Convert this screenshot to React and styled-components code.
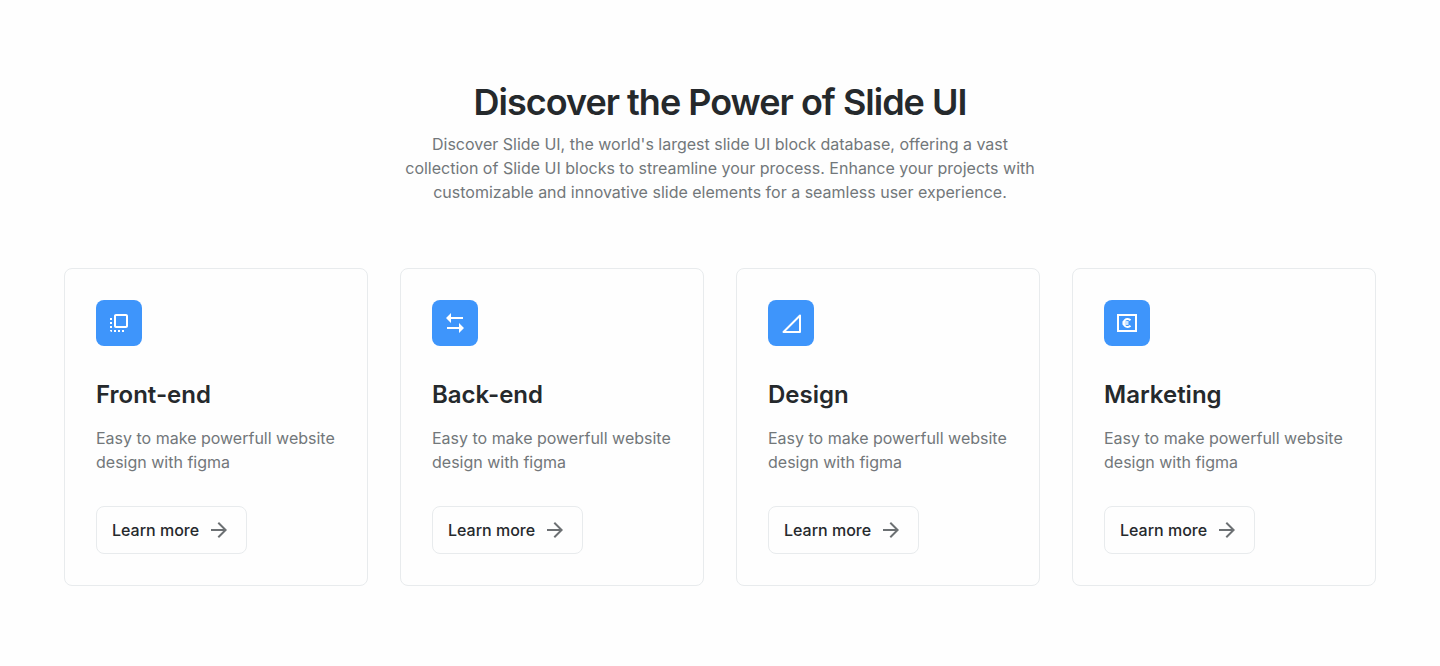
import React from "react";
import styled, { createGlobalStyle } from "styled-components";

const GlobalStyle = createGlobalStyle`
  *, *::before, *::after { box-sizing: border-box; }
  body {
    margin: 0;
    background: #fefefe;
    color: #25292c;
    font-family: Inter, "Liberation Sans", sans-serif;
    -webkit-font-smoothing: antialiased;
  }
`;

const Section = styled.main`
  display: flex;
  flex-direction: column;
  gap: 64px;
  padding: 80px 64px;
`;

const Header = styled.header`
  display: flex;
  flex-direction: column;
  align-items: center;
  gap: 8px;
  text-align: center;
`;

const Title = styled.h1`
  margin: 0;
  font-size: 36px;
  line-height: 44px;
  font-weight: 600;
  letter-spacing: -1px;
`;

const Lead = styled.p`
  margin: 0;
  max-width: 640px;
  font-size: 16px;
  line-height: 24px;
  color: #72777a;
`;

const Grid = styled.div`
  display: grid;
  grid-template-columns: repeat(4, minmax(0, 1fr));
  gap: 32px;
  @media (max-width: 1100px) { grid-template-columns: repeat(2, minmax(0, 1fr)); }
  @media (max-width: 640px) { grid-template-columns: 1fr; }
`;

const Card = styled.article`
  display: flex;
  flex-direction: column;
  align-items: flex-start;
  gap: 32px;
  padding: 31px;
  border: 1px solid #e8ebed;
  border-radius: 8px;
`;

const IconTile = styled.span`
  display: grid;
  place-items: center;
  width: 46px;
  height: 46px;
  border-radius: 8px;
  background: #3e95fb;
  color: #fff;
`;

const CardText = styled.div`
  display: flex;
  flex-direction: column;
  gap: 14px;
`;

const CardTitle = styled.h2`
  margin: 0;
  font-size: 24px;
  line-height: 34px;
  font-weight: 600;
`;

const CardBody = styled.p`
  margin: 0;
  font-size: 16px;
  line-height: 24px;
  color: #72777a;
`;

const Button = styled.button`
  display: inline-flex;
  align-items: center;
  gap: 8px;
  height: 48px;
  padding: 0 15px;
  border: 1px solid #e8ebed;
  border-radius: 8px;
  background: transparent;
  color: #25292c;
  font: 500 16px/24px Inter, "Liberation Sans", sans-serif;
  cursor: pointer;
`;

const IconSvg = styled.svg`
  display: block;
  width: 24px;
  height: 24px;
  fill: currentColor;
`;

const ArrowSvg = styled(IconSvg)`
  color: #6c7073;
`;

const Icon = ({ children }) => (
  <IconSvg viewBox="0 0 24 24" aria-hidden="true">{children}</IconSvg>
);

const FlipToFront = () => (
  <Icon>
    <path d="M3 13h2v-2H3v2zm0 4h2v-2H3v2zm2 4v-2H3c0 1.1.89 2 2 2zM3 9h2V7H3v2zm12 12h2v-2h-2v2zm4-18H9c-1.11 0-2 .9-2 2v10c0 1.1.89 2 2 2h10c1.1 0 2-.9 2-2V5c0-1.1-.9-2-2-2zm0 12H9V5h10v10zm-8 6h2v-2h-2v2zm-4 0h2v-2H7v2z" />
  </Icon>
);

const SwapArrows = () => (
  <Icon>
    <path d="M8 2L3 7l5 5V8h12V6H8V2zM16 12v4H4v2h12v4l5-5-5-5z" />
  </Icon>
);

const SignalTriangle = () => (
  <Icon>
    <path d="M21 4.500V21H4.500z" fill="none" stroke="currentColor" strokeWidth="2" strokeLinejoin="round" />
  </Icon>
);

const EuroBox = () => (
  <Icon>
    <path fillRule="evenodd" d="M2 3h20v18H2zM4 5v14h16V5z" />
    <path fill="none" stroke="currentColor" strokeWidth="2" d="M15.500 9.200a4 4 0 1 0 0 5.600" />
    <path fill="none" stroke="currentColor" strokeWidth="1.400" d="M7.500 11h6M7.500 13h6" />
  </Icon>
);

const services = [
  { title: "Front-end", Glyph: FlipToFront },
  { title: "Back-end", Glyph: SwapArrows },
  { title: "Design", Glyph: SignalTriangle },
  { title: "Marketing", Glyph: EuroBox },
];

export default function App() {
  return (
    <>
      <GlobalStyle />
      <Section>
        <Header>
          <Title>Discover the Power of Slide UI</Title>
          <Lead>
            Discover Slide UI, the world's largest slide UI block database, offering a vast
            collection of Slide UI blocks to streamline your process. Enhance your projects with
            customizable and innovative slide elements for a seamless user experience.
          </Lead>
        </Header>
        <Grid>
          {services.map(({ title, Glyph }) => (
            <Card key={title}>
              <IconTile><Glyph /></IconTile>
              <CardText>
                <CardTitle>{title}</CardTitle>
                <CardBody>Easy to make powerfull website design with figma</CardBody>
              </CardText>
              <Button type="button">
                Learn more
                <ArrowSvg viewBox="0 0 24 24" aria-hidden="true">
                  <path d="M12 4l-1.410 1.410L16.170 11H4v2h12.170l-5.580 5.590L12 20l8-8z" />
                </ArrowSvg>
              </Button>
            </Card>
          ))}
        </Grid>
      </Section>
    </>
  );
}
